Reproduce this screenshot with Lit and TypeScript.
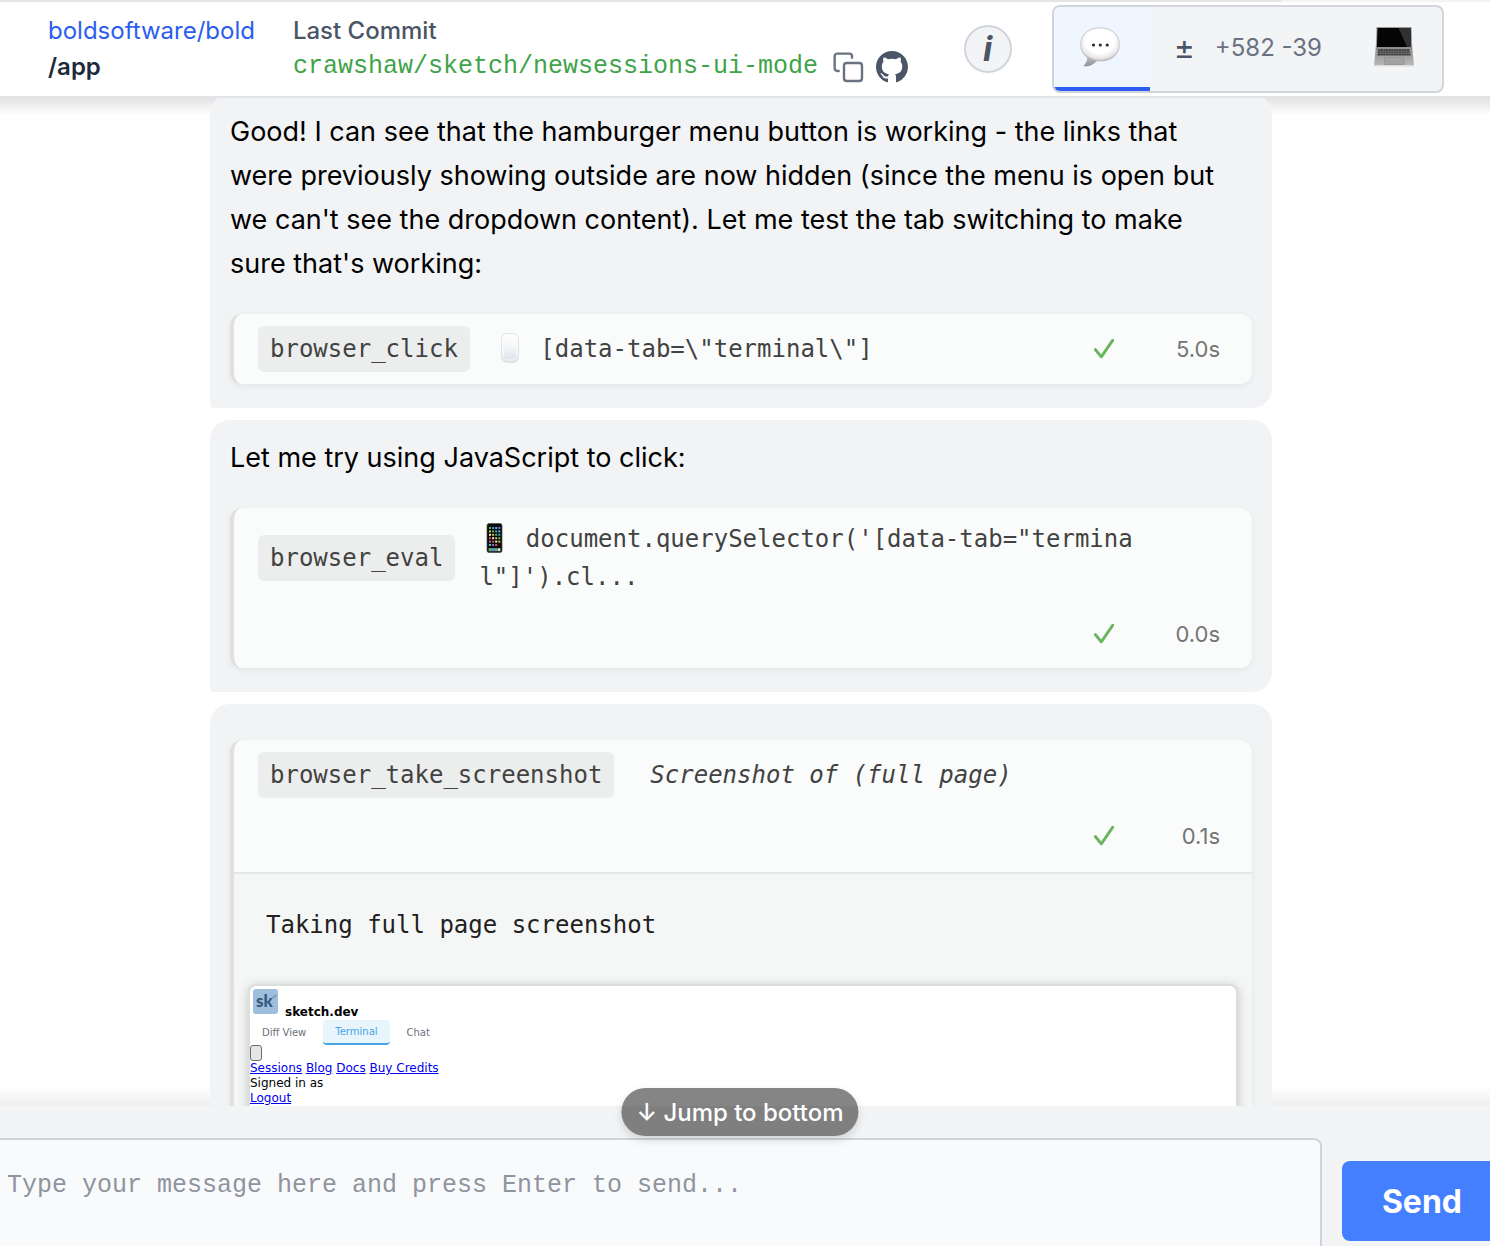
import { LitElement, html, css, svg, nothing, TemplateResult } from "lit";
import { customElement, property } from "lit/decorators.js";

const speechIcon = svg`
  <defs>
    <radialGradient id="bubble" cx="50%" cy="40%" r="62%">
      <stop offset="0.6" stop-color="#ffffff" />
      <stop offset="0.85" stop-color="#e6e6e6" />
      <stop offset="1" stop-color="#a9a9a9" />
    </radialGradient>
    <linearGradient id="tail" x1="0" y1="0" x2="0" y2="1">
      <stop offset="0" stop-color="#c9c9c9" />
      <stop offset="1" stop-color="#8f8f8f" />
    </linearGradient>
  </defs>
  <path d="M7 28c1 5-1 8-3.500 11.200 5.500.800 10.500-2 14-6z" fill="url(#tail)" />
  <path d="M20 .800C31 .800 39.300 7 39.300 17.500S31 34 20 34 .700 28 .700 17.500 9 .800 20 .800z"
    fill="url(#bubble)" stroke="#b4b4b4" stroke-width=".7" />
  <g fill="#2b2b2b"><circle cx="13.500" cy="18" r="1.600" /><circle cx="20.300" cy="18" r="1.600" /><circle cx="27.200" cy="18" r="1.600" /></g>`;

const laptopIcon = svg`
  <defs>
    <linearGradient id="deck" x1="0" y1="0" x2="0" y2="1">
      <stop offset="0" stop-color="#8b8b8b" />
      <stop offset="1" stop-color="#b9b9b9" />
    </linearGradient>
  </defs>
  <path d="M2.500 0h35l.700 21H1.800z" fill="#9a9a9a" />
  <path d="M3.500 1h33l.600 19H2.900z" fill="#050505" />
  <path d="M24.500 1h12l.600 19h-4z" fill="#2f3031" />
  <path d="M1.800 20h36.400L40 38.500H0z" fill="url(#deck)" />
  <path d="M4 22h32l.900 7H3.100z" fill="#747474" />
  <g stroke="#343434" stroke-width="1.300" stroke-dasharray="1.900 .700">
    <path d="M4.500 23h31" /><path d="M4.200 25.200h31.800" /><path d="M4 27.400h32.300" />
  </g>
  <path d="M10.800 30.500h18.800l.600 7H10z" fill="#a2a2a2" stroke="#8b8b8b" stroke-width=".6" />
  <path d="M0 38.200h40v1.300H0z" fill="#dddddd" />`;

const mouseIcon = svg`
  <defs>
    <linearGradient id="mouse" x1="0" y1="0" x2="0" y2="1">
      <stop offset="0" stop-color="#ffffff" />
      <stop offset=".45" stop-color="#f5f6f8" />
      <stop offset="1" stop-color="#dcdfe5" />
    </linearGradient>
  </defs>
  <rect x="7.500" y=".500" width="17" height="29" rx="5.500" fill="url(#mouse)" stroke="#e2e3e6" />
  <rect x="9" y="2" width="14" height="25" rx="4.500" fill="none" stroke="#ffffff" stroke-width=".8" />`;

const appColors = ["#4fc04a", "#e8e8e8", "#8a6bd8", "#3f9cf0", "#d9c04a", "#e0533d", "#45c6d6"];
const phoneIcon = svg`
  <rect x="8" y=".500" width="15" height="29" rx="2" fill="#0b0b0c" stroke="#4a4a4a" stroke-width=".7" />
  ${[0, 1, 2, 3, 4, 5].map((row) =>
    [0, 1, 2, 3].map((col) =>
      row === 5 && col === 3
        ? nothing
        : svg`<rect x=${10 + col * 3.1} y=${4 + row * 3.4} width="2" height="2" fill=${appColors[(row * 4 + col * 3) % 7]} />`
    )
  )}
  <rect x="9.500" y="25" width="12" height="3.400" fill="#63707a" />
  <g><rect x="10" y="25.600" width="2.200" height="2.200" fill="#56c94f" /><rect x="13" y="25.600" width="2.200" height="2.200" fill="#4aa5f2" /><rect x="16" y="25.600" width="2.200" height="2.200" fill="#53c96b" /><rect x="19" y="25.600" width="2.200" height="2.200" fill="#f2f2f2" /></g>`;

@customElement("tool-call")
export class ToolCall extends LitElement {
  @property() name = "";
  @property() summary = "";
  @property() time = "";
  @property({ attribute: false }) icon: TemplateResult | undefined = undefined;
  @property({ type: Boolean }) stacked = false;
  @property({ type: Boolean }) caption = false;
  @property({ type: Boolean }) expanded = false;

  static styles = css`
    :host {
      display: block;
      font-family: "DejaVu Sans Mono", monospace;
      font-size: 24px;
      line-height: 38px;
      color: #424242;
    }
    .card {
      border-left: 4px solid #e0e0e0;
      border-radius: 12px;
      background: #fafcfb;
      box-shadow: 0 2px 6px rgba(0, 0, 0, 0.06);
      overflow: hidden;
    }
    .row {
      display: flex;
      flex-wrap: wrap;
      align-items: center;
      gap: 16px 24px;
      padding: 12px 24px;
    }
    .row.expanded {
      padding-bottom: 14px;
      border-bottom: 2px solid #e5e7e7;
    }
    .name {
      background: #eceeed;
      border-radius: 6px;
      padding: 4px 12px;
    }
    .summary {
      max-width: 660px;
      word-break: break-all;
      white-space: pre-wrap;
    }
    .caption {
      font-style: italic;
      padding-left: 12px;
    }
    .emoji {
      width: 32px;
      height: 30px;
      vertical-align: middle;
      margin: -6px 0 -2px;
    }
    .meta {
      display: flex;
      align-items: center;
      justify-content: flex-end;
      margin-left: auto;
      height: 44px;
      padding-right: 8px;
    }
    .stacked .meta {
      flex-basis: 100%;
    }
    .check {
      width: 20px;
      height: 20px;
    }
    .time {
      font-family: Inter, sans-serif;
      font-size: 22px;
      color: #757575;
      width: 106px;
      text-align: right;
    }
    .body {
      background: #f5f6f6;
      padding: 14px;
    }
  `;

  render() {
    return html`
      <div class="card">
        <div class="row ${this.stacked ? "stacked" : ""} ${this.expanded ? "expanded" : ""}">
          <span class="name">${this.name}</span>
          <span class="summary ${this.caption ? "caption" : ""}"
            >${this.icon
              ? html`<svg class="emoji" viewBox="0 0 30 30" preserveAspectRatio="xMinYMid" aria-hidden="true">${this.icon}</svg>${" "}`
              : nothing}${this.summary}</span
          >
          <span class="meta">
            <svg class="check" viewBox="0 0 20 20" role="img" aria-label="Done">
              <path d="M1.300 10.500 7.300 17.800 18.800 1.200" fill="none" stroke="#6ab45f" stroke-width="2.900"
                stroke-linecap="round" stroke-linejoin="round" />
            </svg>
            <span class="time">${this.time}</span>
          </span>
        </div>
        ${this.expanded ? html`<div class="body"><slot></slot></div>` : nothing}
      </div>
    `;
  }
}

@customElement("app-root")
export class AppRoot extends LitElement {
  static styles = css`
    :host {
      display: flex;
      flex-direction: column;
      height: 100vh;
      overflow: hidden;
      background: #fff;
      font-family: Inter, sans-serif;
      color: #000;
    }
    * {
      box-sizing: border-box;
    }
    button {
      font-family: inherit;
      cursor: pointer;
    }
    .edge {
      height: 2px;
      flex: none;
      background: linear-gradient(90deg, #e5e5e5 86%, #f3f3f3 86%);
    }
    header {
      display: flex;
      align-items: center;
      gap: 38px;
      flex: none;
      height: 96px;
      padding: 0 46px 0 48px;
      background: #fff;
      border-bottom: 2px solid #e3e4e8;
      z-index: 1;
    }
    .titles {
      font-size: 24px;
      line-height: 36px;
      white-space: nowrap;
    }
    .repo {
      display: block;
      color: #2b5df0;
      text-decoration: none;
    }
    .slug {
      margin: 0;
      font-size: 24px;
      font-weight: 600;
      color: #1e2939;
    }
    .commit-label {
      font-weight: 500;
      color: #4a5565;
    }
    .commit {
      display: flex;
      align-items: center;
      gap: 12px;
    }
    .branch {
      font-family: "Liberation Mono", monospace;
      font-size: 25px;
      color: #3fa34a;
      margin-right: 2px;
    }
    .icon-button {
      display: flex;
      padding: 0;
      border: 0;
      background: none;
      color: #6a7282;
    }
    .icon-link {
      display: flex;
      color: #4a5565;
    }
    .copy {
      width: 32px;
      height: 32px;
    }
    .github {
      width: 32px;
      height: 32px;
    }
    .actions {
      display: flex;
      align-items: center;
      gap: 40px;
      margin-left: auto;
    }
    .info {
      width: 48px;
      height: 48px;
      flex: none;
      padding: 0;
      border: 2px solid #d1d5db;
      border-radius: 50%;
      background: #f3f4f6;
      color: #4a5565;
      font-size: 34px;
      line-height: 40px;
      font-weight: 700;
      font-style: italic;
    }
    .tabs {
      display: flex;
      height: 88px;
      flex: none;
      border: 2px solid #d1d5db;
      border-radius: 8px;
      background: #f3f4f6;
      overflow: hidden;
    }
    .tab {
      display: flex;
      align-items: center;
      gap: 20px;
      padding: 0 28px 0 24px;
      border: 0;
      border-bottom: 4px solid transparent;
      background: none;
      color: #4a5565;
      font-size: 32px;
    }
    .tab.active {
      background: #eff6ff;
      border-bottom-color: #2b5cf3;
      padding: 0 30px 0 26px;
    }
    .tab svg {
      width: 40px;
      height: 40px;
    }
    .counts {
      font-size: 24px;
      color: #6a7282;
    }
    main {
      flex: 1;
      min-height: 0;
      overflow: hidden;
      padding-right: 8px;
      background: linear-gradient(#e4e4e4, #fff) top / 100% 18px no-repeat,
        linear-gradient(#fff, #eeeeee) bottom / 100% 20px no-repeat, #fff;
    }
    .feed {
      display: flex;
      flex-direction: column;
      gap: 12px;
      max-width: 1062px;
      margin: -4px auto 0;
    }
    .message {
      padding: 16px 20px 24px;
      border-radius: 20px 20px 20px 4px;
      background: #f2f3f5;
    }
    .message p {
      margin: 0 0 28px;
      padding-right: 20px;
      font-size: 27px;
      line-height: 44px;
    }
    .message.bare {
      padding-top: 36px;
    }
    .output {
      margin: 0;
      padding: 18px;
      font-family: inherit;
      color: #212121;
      line-height: 38px;
    }
    .shot {
      margin-top: 22px;
      height: 400px;
      border: 2px solid #dcdedd;
      border-radius: 8px;
      background: #fff;
      box-shadow: 0 2px 12px rgba(0, 0, 0, 0.2);
      font-family: "DejaVu Sans", sans-serif;
      font-size: 12px;
      line-height: 15px;
      color: #000;
    }
    .shot a {
      color: #0000ee;
    }
    .brand {
      display: flex;
      align-items: flex-end;
      gap: 7px;
      padding: 3px 3px 0;
      height: 34px;
      font-weight: 700;
    }
    .logo {
      position: relative;
      width: 25px;
      height: 25px;
      align-self: flex-start;
      border-radius: 3px;
      background: #9dbfdb;
      color: #35597f;
      padding-left: 3px;
      font-size: 17px;
      line-height: 23px;
      font-family: Lato, sans-serif;
      font-weight: 900;
    }
    .pencil {
      position: absolute;
      top: 5px;
      right: 1px;
      width: 5px;
      height: 5px;
    }
    .mini-tabs {
      display: flex;
      gap: 5px;
    }
    .mini-tab {
      padding: 0 12px;
      height: 25px;
      border: 0;
      border-radius: 4px;
      background: none;
      font-family: inherit;
      font-size: 10px;
      color: #6b7280;
    }
    .mini-tab.on {
      background: #e8f5fd;
      color: #45a5e5;
      border-bottom: 2px solid #45a5e5;
    }
    .mini-menu {
      display: block;
      width: 12px;
      height: 16px;
      padding: 0;
      border: 1px solid #6b6b6b;
      border-radius: 3px;
      background: #e5e5e5;
    }
    .signed {
      border-bottom: 1px solid #e5e7eb;
    }
    footer {
      position: relative;
      display: flex;
      align-items: flex-start;
      gap: 20px;
      flex: none;
      height: 140px;
      padding-top: 32px;
      background: #f3f4f6;
    }
    .prompt {
      flex: 1;
      height: 108px;
      padding: 26px 7px;
      border: 2px solid #d1d3db;
      border-width: 2px 2px 0 0;
      border-radius: 0 8px 0 0;
      background: #f9fafc;
      font-family: "Liberation Mono", monospace;
      font-size: 25px;
      line-height: 40px;
      color: #1e2939;
      resize: none;
      outline: 0;
    }
    .prompt::placeholder {
      color: #8f949e;
      opacity: 1;
    }
    .send {
      height: 80px;
      margin-top: 23px;
      padding: 0 28px 0 40px;
      border: 0;
      border-radius: 8px 0 0 8px;
      background: #437fff;
      color: #fff;
      font-size: 32px;
      font-weight: 700;
    }
    .jump {
      position: absolute;
      top: -18px;
      left: calc(50% - 5px);
      transform: translateX(-50%);
      height: 48px;
      padding: 0 15px;
      border: 0;
      border-radius: 24px;
      background: rgba(0, 0, 0, 0.48);
      color: #fff;
      font-size: 24px;
      font-weight: 500;
      white-space: nowrap;
      box-shadow: 0 4px 10px rgba(0, 0, 0, 0.14);
    }
  `;

  render() {
    return html`
      <div class="edge"></div>
      <header>
        <div class="titles">
          <a class="repo" href="#repo">boldsoftware/bold</a>
          <h1 class="slug">/app</h1>
        </div>
        <div class="titles">
          <div class="commit-label">Last Commit</div>
          <div class="commit">
            <span class="branch">crawshaw/sketch/newsessions-ui-mode</span>
            <button class="icon-button" aria-label="Copy branch name">
              <svg class="copy" viewBox="0 0 24 24" fill="none" stroke="currentColor" stroke-width="1.800"
                stroke-linecap="round" stroke-linejoin="round">
                <rect x="9" y="9" width="13.500" height="13.500" rx="2" />
                <path d="M5 15H4a2 2 0 0 1-2-2V4a2 2 0 0 1 2-2h9a2 2 0 0 1 2 2v1" />
              </svg>
            </button>
            <a class="icon-link" href="#github" aria-label="View on GitHub">
              <svg class="github" viewBox="0 0 16 16" fill="currentColor">
                <path d="M8 0C3.580 0 0 3.580 0 8c0 3.540 2.290 6.530 5.470 7.590.400.070.550-.170.550-.380 0-.190-.010-.820-.010-1.490-2.010.370-2.530-.490-2.690-.940-.090-.230-.480-.940-.820-1.130-.280-.150-.680-.520-.010-.530.630-.010 1.080.580 1.230.820.720 1.210 1.870.870 2.330.660.070-.520.280-.870.510-1.070-1.780-.200-3.640-.890-3.640-3.950 0-.870.310-1.590.820-2.150-.080-.200-.360-1.020.080-2.120 0 0 .670-.210 2.200.820.640-.180 1.320-.270 2-.270.680 0 1.360.090 2 .270 1.530-1.040 2.200-.820 2.200-.820.440 1.100.160 1.920.080 2.120.510.560.820 1.270.820 2.150 0 3.070-1.870 3.750-3.650 3.950.290.250.540.730.540 1.480 0 1.070-.010 1.930-.010 2.200 0 .210.150.460.550.380A8.013 8.013 0 0 0 16 8c0-4.420-3.580-8-8-8z" />
              </svg>
            </a>
          </div>
        </div>
        <div class="actions">
          <button class="info" aria-label="Session info">i</button>
          <nav class="tabs" aria-label="Views">
            <button class="tab active" aria-label="Chat"><svg viewBox="0 0 40 40">${speechIcon}</svg></button>
            <button class="tab" aria-label="Diff"><span>±</span><span class="counts">+582 -39</span></button>
            <button class="tab" aria-label="Terminal"><svg viewBox="0 0 40 40">${laptopIcon}</svg></button>
          </nav>
        </div>
      </header>
      <main>
        <div class="feed">
          <section class="message">
            <p>
              Good! I can see that the hamburger menu button is working - the links that were previously showing
              outside are now hidden (since the menu is open but we can't see the dropdown content). Let me test the
              tab switching to make sure that's working:
            </p>
            <tool-call name="browser_click" .icon=${mouseIcon} summary='[data-tab=\\"terminal\\"]' time="5.0s"></tool-call>
          </section>
          <section class="message">
            <p>Let me try using JavaScript to click:</p>
            <tool-call
              stacked
              name="browser_eval"
              .icon=${phoneIcon}
              .summary=${`document.querySelector('[data-tab="terminal"]').cl...`}
              time="0.0s"
            ></tool-call>
          </section>
          <section class="message bare">
            <tool-call
              stacked
              caption
              expanded
              name="browser_take_screenshot"
              summary="Screenshot of (full page)"
              time="0.1s"
            >
              <pre class="output">Taking full page screenshot</pre>
              <div class="shot">
                <div class="brand">
                  <span class="logo"
                    >sk<svg class="pencil" viewBox="0 0 5 5" aria-hidden="true"
                      ><path d="M.500 4.500 1 2.500 4 .500 4.500 1.500 2 4z" fill="#6d93b5" /></svg
                  ></span>
                  <span>sketch.dev</span>
                </div>
                <div class="mini-tabs">
                  <button class="mini-tab">Diff View</button>
                  <button class="mini-tab on">Terminal</button>
                  <button class="mini-tab">Chat</button>
                </div>
                <button class="mini-menu" aria-label="Menu"></button>
                <div>
                  <a href="#sessions">Sessions</a> <a href="#blog">Blog</a> <a href="#docs">Docs</a>
                  <a href="#credits">Buy Credits</a>
                </div>
                <div class="signed">Signed in as<br /><a href="#logout">Logout</a></div>
              </div>
            </tool-call>
          </section>
        </div>
      </main>
      <footer>
        <textarea
          class="prompt"
          aria-label="Message"
          placeholder="Type your message here and press Enter to send..."
        ></textarea>
        <button class="send">Send</button>
        <button class="jump">↓ Jump to bottom</button>
      </footer>
    `;
  }
}
